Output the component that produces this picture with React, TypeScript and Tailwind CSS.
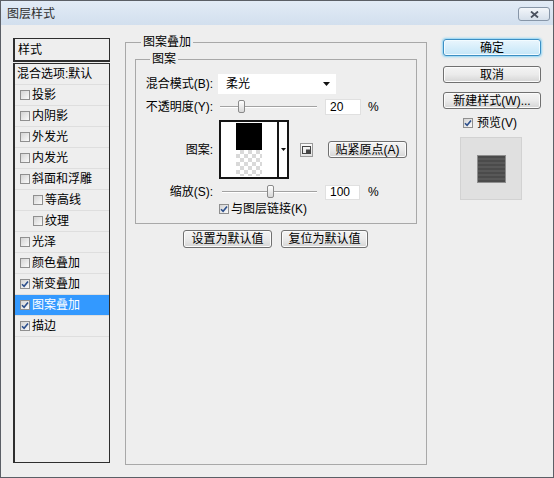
import React from "react";

const FONT = "font-['Liberation_Sans','Noto_Sans_CJK_SC',sans-serif]";

function Check({ checked }: { checked?: boolean }) {
  return (
    <span className="flex w-[10px] h-[10px] shrink-0 items-center justify-center border border-[#8f8f8f] bg-gradient-to-br from-[#d4d4d4] to-[#fafafa]">
      {checked && (
        <svg width="8" height="8" viewBox="0 0 8 8">
          <path d="M1 4.2 L3.1 6.3 L7 1.4" stroke="#2c4f8c" strokeWidth="1.6" fill="none" />
        </svg>
      )}
    </span>
  );
}

function Btn({ children, className = "" }: { children: React.ReactNode; className?: string }) {
  return (
    <div
      className={
        "flex items-center justify-center h-[17px] rounded-[3px] border border-[#707070] bg-gradient-to-b from-[#f4f4f4] via-[#ebebeb] to-[#d5d5d5] shadow-[inset_0_0_0_1px_#fbfbfb] text-[12px] leading-none text-black " +
        className
      }
    >
      {children}
    </div>
  );
}

function Slider({ width, thumb }: { width: number; thumb: number }) {
  return (
    <div className="relative h-[14px] flex items-center" style={{ width }}>
      <div className="w-full h-[2px] border-t border-[#a2a2a2] border-b border-b-white" />
      <div
        className="absolute top-[0px] w-[7px] h-[13px] rounded-[2px] border border-[#8a8a8a] bg-gradient-to-b from-white to-[#d8d8d8]"
        style={{ left: thumb }}
      />
    </div>
  );
}

const rows: { t: string; cb?: boolean; checked?: boolean; indent?: boolean; sel?: boolean }[] = [
  { t: "混合选项:默认" },
  { t: "投影", cb: true },
  { t: "内阴影", cb: true },
  { t: "外发光", cb: true },
  { t: "内发光", cb: true },
  { t: "斜面和浮雕", cb: true },
  { t: "等高线", cb: true, indent: true },
  { t: "纹理", cb: true, indent: true },
  { t: "光泽", cb: true },
  { t: "颜色叠加", cb: true },
  { t: "渐变叠加", cb: true, checked: true },
  { t: "图案叠加", cb: true, checked: true, sel: true },
  { t: "描边", cb: true, checked: true },
];

export default function App() {
  return (
    <div
      className={
        "w-[554px] h-[478px] border border-[#5b5f66] bg-[#eeeeee] flex flex-col text-[12px] leading-[16px] text-black " +
        FONT
      }
    >
      {/* title bar */}
      <div className="h-[24px] flex items-start justify-between bg-gradient-to-b from-[#e2ebf6] to-[#d2dfee]">
        <div className="pl-[6px] pt-[5px] text-[#2e2e2e]">图层样式</div>
        <div className="mt-[6px] mr-[3px] w-[32px] h-[14px] rounded-[3px] border border-[#8796a8] bg-gradient-to-b from-[#f3f6fa] to-[#d5dfea] flex items-center justify-center">
          <svg width="9" height="7" viewBox="0 0 9 7">
            <path d="M1 0.5 L8 6.5 M8 0.5 L1 6.5" stroke="#4a5260" strokeWidth="1.8" />
          </svg>
        </div>
      </div>

      {/* body */}
      <div className="flex-1 flex items-start pl-[12px]">
        {/* left column */}
        <div className="mt-[13px] w-[97px] flex flex-col">
          <div className="h-[24px] border border-[#2e2e2e] border-l-2 border-b-2 flex items-center pl-[3px]">样式</div>
          <div className="mt-[1px] h-[400px] border border-[#2e2e2e] border-l-2 flex flex-col">
            {rows.map((r) => (
              <div
                key={r.t}
                className={
                  "h-[21px] shrink-0 flex items-center border-b border-[#dedede] " +
                  (r.sel ? "bg-[#3399ff] text-white " : "") +
                  (r.indent ? "pl-[18px]" : r.cb ? "pl-[5px]" : "pl-[2px]")
                }
              >
                {r.cb && <Check checked={r.checked} />}
                <span className={r.cb ? "ml-[2px]" : ""}>{r.t}</span>
              </div>
            ))}
          </div>
        </div>

        {/* center group */}
        <fieldset className="ml-[15px] mt-[9px] w-[302px] h-[431px] border border-[#a8a8a8] px-0 pb-0 m-0">
          <legend className="ml-[15px] px-[2px] leading-[16px]">图案叠加</legend>
          <fieldset className="ml-[9px] mt-[1px] w-[282px] h-[173px] border border-[#a8a8a8] px-0 pb-0 m-0">
            <legend className="ml-[14px] px-[2px] leading-[16px]">图案</legend>

            {/* blend mode */}
            <div className="mt-[7px] h-[20px] flex items-center">
              <div className="w-[77px] text-right">混合模式(B):</div>
              <div className="ml-[5px] w-[118px] h-[20px] bg-white flex items-center justify-between pl-[8px] pr-[6px]">
                <span>柔光</span>
                <svg width="7" height="4" viewBox="0 0 7 4">
                  <path d="M0 0 L7 0 L3.5 4 Z" fill="#111" />
                </svg>
              </div>
            </div>

            {/* opacity */}
            <div className="mt-[4px] h-[18px] flex items-center">
              <div className="w-[77px] text-right">不透明度(Y):</div>
              <div className="ml-[7px]">
                <Slider width={97} thumb={18} />
              </div>
              <div className="ml-[8px] w-[36px] h-[16px] bg-white border border-[#e0e0e0] flex items-center pl-[4px]">20</div>
              <div className="ml-[7px]">%</div>
            </div>

            {/* pattern */}
            <div className="mt-[4px] h-[59px] flex items-center">
              <div className="w-[77px] text-right">图案:</div>
              <div className="ml-[6px] w-[70px] h-[59px] border-2 border-[#151515] flex">
                <div className="flex-1 bg-white flex flex-col items-start pl-[15px] pt-[1px]">
                  <div className="w-[26px] h-[27px] bg-black" />
                  <div className="w-[26px] h-[26px] bg-[conic-gradient(#d9d9d9_25%,#ffffff_0_50%,#d9d9d9_0_75%,#ffffff_0)] bg-[length:8px_8px]" />
                </div>
                <div className="w-[10px] border-l-2 border-[#151515] bg-white flex items-center justify-center">
                  <svg width="5" height="3" viewBox="0 0 5 3">
                    <path d="M0 0 L5 0 L2.5 3 Z" fill="#111" />
                  </svg>
                </div>
              </div>
              <div className="ml-[11px] w-[13px] h-[14px] border border-[#9a9a9a] bg-gradient-to-b from-[#fafafa] to-[#e2e2e2] flex items-center justify-center">
                <svg width="9" height="8" viewBox="0 0 9 8">
                  <rect x="0.5" y="0.5" width="8" height="7" fill="none" stroke="#444" />
                  <rect x="4" y="3.5" width="4" height="3.5" fill="#444" />
                </svg>
              </div>
              <Btn className="ml-[15px] w-[79px]">贴紧原点(A)</Btn>
            </div>

            {/* scale */}
            <div className="mt-[4px] h-[18px] flex items-center">
              <div className="w-[77px] text-right">缩放(S):</div>
              <div className="ml-[9px]">
                <Slider width={95} thumb={45} />
              </div>
              <div className="ml-[8px] w-[35px] h-[15px] bg-white border border-[#e0e0e0] flex items-center pl-[4px]">100</div>
              <div className="ml-[8px]">%</div>
            </div>

            {/* link */}
            <div className="h-[16px] flex items-center pl-[83px]">
              <Check checked />
              <span className="ml-[2px]">与图层链接(K)</span>
            </div>
          </fieldset>

          <div className="mt-[6px] ml-[57px] flex gap-[9px]">
            <Btn className="w-[89px] h-[18px]">设置为默认值</Btn>
            <Btn className="w-[87px] h-[18px]">复位为默认值</Btn>
          </div>
        </fieldset>

        {/* right column */}
        <div className="ml-[16px] mt-[14px] w-[98px] flex flex-col">
          <div className="h-[17px] rounded-[3px] border border-[#3b8fc4] bg-gradient-to-b from-[#eaf6fd] to-[#c4e6f8] shadow-[0_0_2px_1px_#8fd4f4,inset_0_0_0_1px_#f2fbff] flex items-center justify-center leading-none">
            确定
          </div>
          <Btn className="mt-[10px]">取消</Btn>
          <Btn className="mt-[9px]">新建样式(W)...</Btn>
          <div className="mt-[8px] h-[12px] flex items-center pl-[20px]">
            <Check checked />
            <span className="ml-[4px]">预览(V)</span>
          </div>
          <div className="mt-[8px] ml-[17px] w-[62px] h-[63px] bg-[#e0e0e0] border border-[#d2d2d2] flex items-center justify-center">
            <div className="w-[29px] h-[28px] border border-[#8e8e8e] bg-[repeating-linear-gradient(#4b4b4b_0_2px,#585858_2px_4px)]" />
          </div>
        </div>
      </div>
    </div>
  );
}
